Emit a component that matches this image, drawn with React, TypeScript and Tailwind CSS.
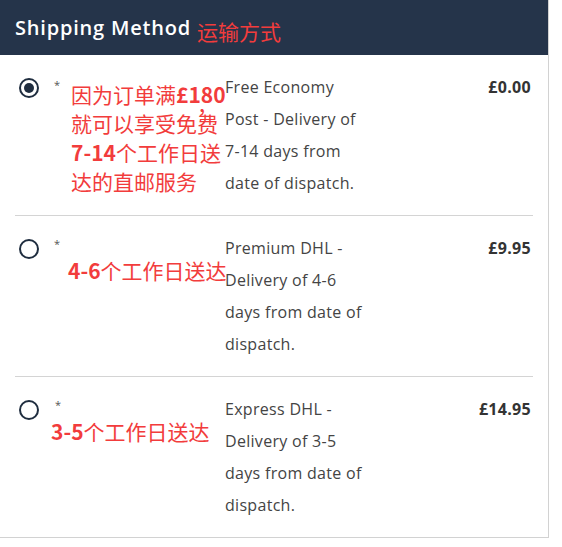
import React from "react";

const latin = "font-['Open_Sans','Noto_Sans_CJK_SC',sans-serif]";
const cjk = "font-['Noto_Sans_CJK_SC',sans-serif]";

type Option = {
  id: string;
  selected: boolean;
  lines: string[];
  price: string;
};

const options: Option[] = [
  {
    id: "economy",
    selected: true,
    lines: ["Free Economy", "Post - Delivery of", "7-14 days from", "date of dispatch."],
    price: "£0.00",
  },
  {
    id: "premium",
    selected: false,
    lines: ["Premium DHL -", "Delivery of 4-6", "days from date of", "dispatch."],
    price: "£9.95",
  },
  {
    id: "express",
    selected: false,
    lines: ["Express DHL -", "Delivery of 3-5", "days from date of", "dispatch."],
    price: "£14.95",
  },
];

function Radio({ checked }: { checked: boolean }) {
  return (
    <div className="flex h-[20px] w-[20px] items-center justify-center rounded-full border-2 border-[#1f2d3f] bg-white">
      {checked && <div className="h-[10px] w-[10px] rounded-full bg-[#1f2d3f]" />}
    </div>
  );
}

function Note({ index }: { index: number }) {
  if (index === 0) {
    return (
      <div className="flex">
        <span className="ml-[15px] mt-[6px] text-[11px] leading-[16px] text-[#555]">*</span>
        <div className={`${cjk} ml-[11px] mt-[9px] w-[154px] text-[21px] leading-[29px] text-[#f23c3c]`}>
          <div className="relative whitespace-nowrap">
            因为订单满<b className="font-bold">£180</b>
            <span className="absolute left-[126px] top-[10px]">，</span>
          </div>
          <div>就可以享受免费</div>
          <div className="whitespace-nowrap">
            <b className="font-bold">7-14</b>个工作日送
          </div>
          <div>达的直邮服务</div>
        </div>
      </div>
    );
  }
  const text = index === 1 ? "4-6" : "3-5";
  return (
    <div>
      <span className={`${index === 1 ? "ml-[15px]" : "ml-[16px]"} mt-[4px] block text-[11px] leading-[16px] text-[#555]`}>*</span>
      <div
        className={`${cjk} ${index === 1 ? "ml-[29px]" : "ml-[12px]"} mt-[4px] whitespace-nowrap text-[21px] leading-[29px] text-[#f23c3c]`}
      >
        <b className="font-bold">{text}</b>个工作日送达
      </div>
    </div>
  );
}

export default function App() {
  return (
    <div className={`${latin} w-[549px] border-r border-b border-[#d2d2d2] bg-white`}>
      <div className="flex h-[55px] items-center bg-[#25344a] px-[15px]">
        <h2 className="text-[20px] font-semibold tracking-[0.8px] text-white">Shipping Method</h2>
        <span className={`${cjk} ml-[6px] mt-[8px] text-[21px] text-[#f23c3c]`}>运输方式</span>
      </div>
      <div className="px-[15px]">
        {options.map((o, i) => (
          <div
            key={o.id}
            className={`flex py-[16px] ${i < options.length - 1 ? "border-b border-[#d4d4d4]" : ""}`}
          >
            <div className="ml-[4px] mt-[7px]">
              <Radio checked={o.selected} />
            </div>
            <div className="w-[186px]">
              <Note index={i} />
            </div>
            <div className="w-[156px] text-[16px] leading-[32px] tracking-[0.3px] text-[#444]">
              {o.lines.map((l) => (
                <div key={l} className="whitespace-nowrap">
                  {l}
                </div>
              ))}
            </div>
            <div className="flex-1 pr-[2px] text-right text-[16px] font-bold leading-[32px] tracking-[0.3px] text-[#333]">
              {o.price}
            </div>
          </div>
        ))}
      </div>
    </div>
  );
}
